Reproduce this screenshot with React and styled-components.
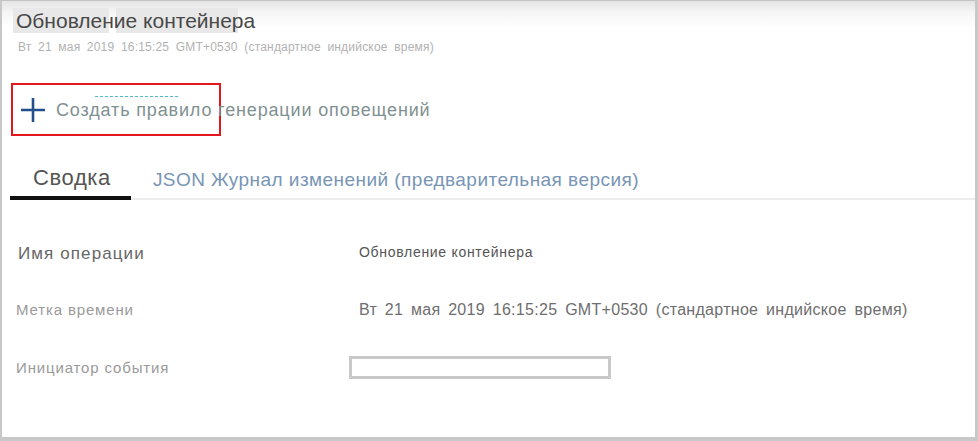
import styled, { createGlobalStyle } from "styled-components";

const Global = createGlobalStyle`
	body {
		margin: 0;
		background: #ffffff;
		font-family: "Liberation Sans", Arial, sans-serif;
	}
`;

// 전체 패널 프레임
const Frame = styled.div`
	width: 978px;
	height: 441px;
	box-sizing: border-box;
	border-top: 1px solid #c4c4c4;
	border-left: 2px solid #c8c8c8;
	border-right: 3px solid #c8c8c8;
	border-bottom: 4px solid #c8c8c8;
	background: linear-gradient(#e4e4e4 0px, #f6f6f6 12px, #fdfdfd 24px, #ffffff 26px);
	display: flex;
	flex-direction: column;
`;

const Header = styled.div`
	padding: 7px 0 0 11px;
	display: flex;
	flex-direction: column;
	align-items: flex-start;
`;

// 제목 뒤의 회색 배경은 두 조각으로 끊겨 있음
const Title = styled.h1`
	margin: 0;
	padding: 1px 0 0 3px;
	font-size: 21px;
	font-weight: 400;
	line-height: 24px;
	color: #484848;
	background: linear-gradient(
		to right,
		#e8e8e8 0px,
		#e8e8e8 96px,
		transparent 96px,
		transparent 103px,
		#e8e8e8 103px,
		#e8e8e8 225px,
		transparent 225px
	);
`;

const Subtitle = styled.div`
	margin: 7px 0 0 5px;
	font-size: 12px;
	line-height: 14px;
	color: #b2b2b2;
	word-spacing: 3px;
	letter-spacing: 0.2px;
`;

const ActionRow = styled.div`
	margin: 29px 0 0 9px;
	display: flex;
	align-items: center;
	position: relative;
	height: 53px;
`;

// 빨간 강조 박스
const Highlight = styled.div`
	position: absolute;
	left: 0;
	top: 0;
	width: 210px;
	height: 53px;
	box-sizing: border-box;
	border: 2px solid #e3151f;
	pointer-events: none;
`;

const PlusIcon = styled.svg`
	width: 26px;
	height: 26px;
	margin: 0 10px 0 9px;
	flex-shrink: 0;
`;

const ActionText = styled.span`
	font-size: 18px;
	color: #7f9191;
	letter-spacing: 0.85px;
	position: relative;
	top: 1px;
`;

const Dotted = styled.span`
	position: absolute;
	left: 39px;
	top: -4px;
	width: 83px;
	border-top: 1px dashed #52b6cc;
`;

const Tabs = styled.div`
	margin: 29px 0 0 8px;
	display: flex;
	align-items: flex-end;
	border-bottom: 2px solid #ececec;
`;

const Tab = styled.div`
	padding: ${(p) => (p.$active ? "0 20px 5px 23px" : "0 0 7px 22px")};
	font-size: ${(p) => (p.$active ? "22px" : "19px")};
	letter-spacing: ${(p) => (p.$active ? "0.6px" : "0.45px")};
	line-height: 26px;
	color: ${(p) => (p.$active ? "#555555" : "#7895b5")};
	border-bottom: ${(p) => (p.$active ? "4px solid #111111" : "none")};
	margin-bottom: -2px;
`;

const Details = styled.div`
	margin: 40px 0 0 0;
	display: grid;
	grid-template-columns: 346px 1fr;
	grid-auto-rows: 58px;
`;

const Label = styled.div`
	padding-left: ${(p) => (p.$strong ? "16px" : "14px")};
	padding-top: ${(p) => (p.$strong ? "2px" : "0")};
	font-size: ${(p) => (p.$strong ? "17px" : "15px")};
	letter-spacing: ${(p) => (p.$strong ? "1.1px" : "0.85px")};
	color: ${(p) => (p.$strong ? "#666666" : "#9a9a9a")};
	line-height: 24px;
`;

const Value = styled.div`
	padding-left: ${(p) => (p.$box ? "1px" : "11px")};
	font-size: ${(p) => (p.$small ? "14px" : "16px")};
	letter-spacing: ${(p) => (p.$small ? "0.7px" : "0.3px")};
	word-spacing: ${(p) => (p.$small ? "0" : "3px")};
	color: ${(p) => (p.$small ? "#555555" : "#6e6e6e")};
	line-height: 24px;
`;

const EmptyBox = styled.div`
	width: 262px;
	height: 23px;
	box-sizing: border-box;
	border: 3px solid #c8c8c8;
	margin-top: 0;
`;

export default function App() {
	return (
		<>
			<Global />
			<Frame>
				<Header>
					<Title>Обновление контейнера</Title>
					<Subtitle>Вт 21 мая 2019 16:15:25 GMT+0530 (стандартное индийское время)</Subtitle>
				</Header>
				<ActionRow>
					<Highlight />
					<PlusIcon viewBox="0 0 26 26">
						<path d="M13 1v24M1 13h24" stroke="#234f8c" strokeWidth="2.6" fill="none" />
					</PlusIcon>
					<ActionText>
						<Dotted />
						Создать правило генерации оповещений
					</ActionText>
				</ActionRow>
				<Tabs>
					<Tab $active>Сводка</Tab>
					<Tab>JSON Журнал изменений (предварительная версия)</Tab>
				</Tabs>
				<Details>
					<Label $strong>Имя операции</Label>
					<Value $small>Обновление контейнера</Value>
					<Label>Метка времени</Label>
					<Value>Вт 21 мая 2019 16:15:25 GMT+0530 (стандартное индийское время)</Value>
					<Label>Инициатор события</Label>
					<Value $box>
						<EmptyBox />
					</Value>
				</Details>
			</Frame>
		</>
	);
}
